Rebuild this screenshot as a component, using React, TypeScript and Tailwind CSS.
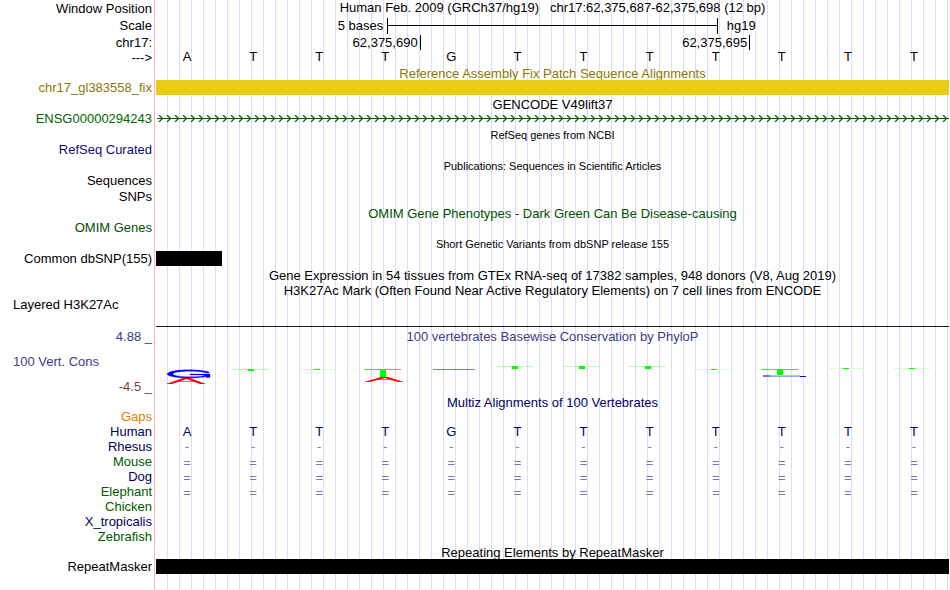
import React from "react";

const BASES = ["A", "T", "T", "T", "G", "T", "T", "T", "T", "T", "T", "T"];

type RowProps = {
  label?: string;
  tone?: string;
  height?: string;
  children?: React.ReactNode;
};

function Row({ label, tone = "text-black", height = "h-[15px]", children }: RowProps) {
  return (
    <div className={`flex ${height}`}>
      <div className={`w-[154px] shrink-0 pr-[2px] text-right ${tone}`}>{label}</div>
      <div className="min-w-0 flex-1">{children}</div>
    </div>
  );
}

function Title({
  children,
  tone = "text-black",
  size = "text-[13px]",
  height = "h-[15px] pt-px",
}: {
  children: React.ReactNode;
  tone?: string;
  size?: string;
  height?: string;
}) {
  return (
    <Row height={height}>
      <h2 className={`ml-[2px] mr-px text-center ${tone} ${size}`}>{children}</h2>
    </Row>
  );
}

function Letters({ items, tone = "text-black" }: { items: string[]; tone?: string }) {
  return (
    <div className={`grid grid-cols-12 pr-[3px] text-center ${tone}`}>
      {items.map((item, i) => (
        <span key={i}>{item}</span>
      ))}
    </div>
  );
}

function LogoT({ y, h, line }: { y: number; h: number; line: string }) {
  return (
    <g>
      <rect x="12" y={y} width="37" height="1" fill={line} />
      <rect x="28" y={y} width="6" height={h} fill="#00ff00" />
    </g>
  );
}

function LogoA({ y, h }: { y: number; h: number }) {
  return (
    <g transform={`translate(0 ${y})`} fill="#ff0000">
      <path d={`M12 ${h} L29 0 H36 L52 ${h} H46 L32.5 1 L18 ${h} Z`} />
      <rect x="22" y={h - 3} width="21" height="1" fillOpacity="0.6" />
    </g>
  );
}

const FAINT = "#b0ffb0";
const FAINTER = "#dcfadc";

const LOGOS: React.ReactNode[] = [
  <g>
    <path
      d="M55 8 C46 5 16 4.6 13 10 C14 14.8 46 14.8 52 12.6 V13.5 H56 V10 H36 V11 H51 C48 13.8 20 13.4 19 10 C20 6.4 46 6.4 53 9 H55 Z"
      fill="#0000ff"
      stroke="#0000ff"
      strokeWidth="0.3"
    />
    <LogoA y={14} h={6} />
  </g>,
  <LogoT y={5} h={2} line={FAINT} />,
  <LogoT y={5} h={1} line={FAINTER} />,
  <g>
    <LogoT y={5} h={8} line="#30f030" />
    <LogoA y={13} h={5} />
  </g>,
  <rect x="15" y="5" width="42" height="1" fill="#7878f0" />,
  <LogoT y={2} h={3} line={FAINT} />,
  <LogoT y={2} h={3} line={FAINT} />,
  <LogoT y={2} h={3} line={FAINT} />,
  <LogoT y={5} h={1} line={FAINTER} />,
  <g>
    <LogoT y={5} h={6} line="#30f030" />
    <rect x="14" y="11" width="37" height="1" fill="#c0c0ff" />
    <rect x="14" y="11" width="7" height="2" fill="#7070ff" />
    <rect x="21" y="12" width="30" height="1" fill="#a0a0ff" />
    <rect x="51" y="12" width="6" height="1" fill="#0000ff" />
  </g>,
  <LogoT y={4} h={1} line={FAINTER} />,
  <LogoT y={4} h={1} line={FAINTER} />,
];

const SPECIES = [
  { name: "Human", tone: "text-[#000060]", cells: BASES, cellTone: "text-[#000064]" },
  { name: "Rhesus", tone: "text-[#000060]", cells: BASES.map(() => "-"), cellTone: "text-[#7878a8]" },
  { name: "Mouse", tone: "text-[#005a00]", cells: BASES.map(() => "="), cellTone: "pt-px text-[#7878a8]" },
  { name: "Dog", tone: "text-[#000060]", cells: BASES.map(() => "="), cellTone: "pt-px text-[#7878a8]" },
  { name: "Elephant", tone: "text-[#005a00]", cells: BASES.map(() => "="), cellTone: "pt-px text-[#7878a8]" },
  { name: "Chicken", tone: "text-[#005a00]", cells: [], cellTone: "" },
  { name: "X_tropicalis", tone: "text-[#000060]", cells: [], cellTone: "" },
  { name: "Zebrafish", tone: "text-[#005a00]", cells: [], cellTone: "" },
];

export default function App() {
  return (
    <main className="min-h-screen bg-white bg-[linear-gradient(to_right,#fff_154px,#ffb4b4_154px,#ffb4b4_155px,#fff_155px,#fff_156px,transparent_156px),repeating-linear-gradient(to_right,transparent_0px,transparent_11px,#dcdcf5_11px,#dcdcf5_12px)] font-['Liberation_Sans',Arial,sans-serif] text-[13px] leading-[15px] whitespace-nowrap">
      <Row label="Window Position" height="h-[17px] items-start pt-px">
        <h1 className="-mt-px ml-[2px] mr-px whitespace-pre text-center">
          {"Human Feb. 2009 (GRCh37/hg19)   chr17:62,375,687-62,375,698 (12 bp)"}
        </h1>
      </Row>
      <Row label="Scale" height="h-[17px] items-center">
        <div className="ml-[2px] mr-px grid h-4 grid-cols-[7fr_10fr_7fr]">
          <span className="pr-1 text-right">5 bases</span>
          <div className="flex items-center border-x border-black">
            <div className="h-px w-full bg-black" />
          </div>
          <span className="pl-[9px]">hg19</span>
        </div>
      </Row>
      <Row label="chr17:" height="h-4 items-center">
        <div className="ml-[2px] mr-[3px] grid h-[15px] grid-cols-12">
          <span className="col-span-4 pr-[2px] text-right">62,375,690</span>
          <span className="col-span-5 border-l border-black pr-[2px] text-right">62,375,695</span>
          <span className="col-span-3 border-l border-black" />
        </div>
      </Row>
      <Row label="--->" height="h-4">
        <div className="-mt-px">
          <Letters items={BASES} />
        </div>
      </Row>
      <Title tone="text-[#8c7800]" height="h-[14px]">Reference Assembly Fix Patch Sequence Alignments</Title>
      <Row label="chr17_gl383558_fix" tone="text-[#8c7800]">
        <div className="ml-[2px] mr-px h-[15px] bg-[#e8cc16]" />
      </Row>
      <Title height="h-4 pt-[2px]">GENCODE V49lift37</Title>
      <Row label="ENSG00000294243" tone="text-[#006400]" height="h-4">
        <div className="ml-[3px] mr-px pt-[4px]">
          <svg className="block h-[7px] w-full" aria-hidden="true">
            <defs>
              <pattern id="strand" width="8" height="7" patternUnits="userSpaceOnUse">
                <path d="M2 0 L5.5 3.5 L2 7" fill="none" stroke="#006400" strokeWidth="1.3" />
              </pattern>
            </defs>
            <rect width="100%" height="7" fill="url(#strand)" />
            <rect y="3" width="100%" height="1" fill="#006400" />
          </svg>
        </div>
      </Row>
      <Title size="text-[11px]">RefSeq genes from NCBI</Title>
      <Row label="RefSeq Curated" tone="text-[#0c0c78]" height="h-4" />
      <Title size="text-[11px]">Publications: Sequences in Scientific Articles</Title>
      <Row label="Sequences" height="h-4" />
      <Row label="SNPs" height="h-4" />
      <Title tone="text-[#005000]">OMIM Gene Phenotypes - Dark Green Can Be Disease-causing</Title>
      <Row label="OMIM Genes" tone="text-[#005000]" height="h-4" />
      <Title size="text-[11px]">Short Genetic Variants from dbSNP release 155</Title>
      <Row label="Common dbSNP(155)" height="h-4">
        <div className="ml-[2px] mr-px">
          <div className="h-[15px] w-1/12 bg-black" />
        </div>
      </Row>
      <Title>Gene Expression in 54 tissues from GTEx RNA-seq of 17382 samples, 948 donors (V8, Aug 2019)</Title>
      <Title>H3K27Ac Mark (Often Found Near Active Regulatory Elements) on 7 cell lines from ENCODE</Title>
      <div className="h-[29px] pl-[13px]">Layered H3K27Ac</div>
      <div className="ml-[156px] mr-px h-px bg-[#281428]" />
      <section className="flex h-[68px] pt-[2px]">
        <div className="flex w-[154px] shrink-0 flex-col gap-[10px] pl-[13px] pr-[2px] text-[#3c3c8c]">
          <span className="text-right">4.88 _</span>
          <span>100 Vert. Cons</span>
          <span className="text-right text-[#823c3c]">-4.5 _</span>
        </div>
        <div className="min-w-0 flex-1">
          <h2 className="ml-[2px] mr-px text-center text-[#3c3c8c]">
            100 vertebrates Basewise Conservation by PhyloP
          </h2>
          <div className="grid grid-cols-12 pr-[3px] pt-5">
            {LOGOS.map((logo, i) => (
              <svg key={i} className="block h-5 w-[66px]" viewBox="0 0 66 20" aria-hidden="true">
                {logo}
              </svg>
            ))}
          </div>
        </div>
      </section>
      <Title tone="text-[#000064]" height="h-[14px]">Multiz Alignments of 100 Vertebrates</Title>
      <Row label="Gaps" tone="text-[#e08200]" />
      {SPECIES.map((s) => (
        <Row key={s.name} label={s.name} tone={s.tone}>
          <Letters items={s.cells} tone={s.cellTone} />
        </Row>
      ))}
      <Title>Repeating Elements by RepeatMasker</Title>
      <Row label="RepeatMasker">
        <div className="ml-[2px] mr-px h-[15px] bg-black" />
      </Row>
    </main>
  );
}
